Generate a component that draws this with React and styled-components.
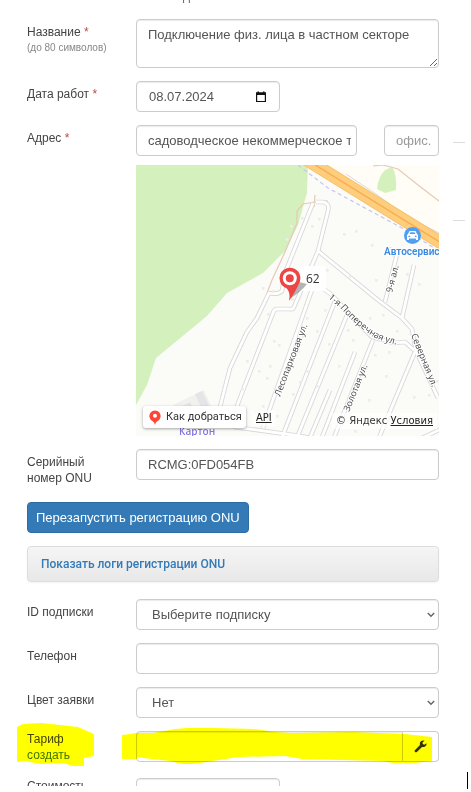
import React from "react";
import styled, { createGlobalStyle } from "styled-components";

const GlobalStyle = createGlobalStyle`
  *, *::before, *::after { box-sizing: border-box; }
  body {
    margin: 0;
    background: #fff;
    color: #444;
    font: 12px/16px "Liberation Sans", Arial, sans-serif;
  }
  button, input, select, textarea { font: inherit; color: inherit; }
`;

const controlFont = `13px/18px "Liberation Sans", Arial, sans-serif`;

const Page = styled.div`
  display: grid;
  grid-template-columns: minmax(0, 1fr) 18px;
  column-gap: 14px;
  min-height: 100vh;
  padding-left: 27px;
`;

const CutHeading = styled.div`
  display: flex;
  align-items: flex-end;
  height: 3px;
  padding-left: 156px;
  margin-bottom: 16px;
  overflow: hidden;
  color: #8a4a4a;
  line-height: 14px;
`;

const Form = styled.form`
  display: flex;
  flex-direction: column;
`;

const Row = styled.div`
  display: grid;
  grid-template-columns: 77px minmax(0, 1fr);
  column-gap: 32px;
  margin-bottom: 13px;
  ${(p) => p.$cut && "height: 8px; margin: 2px 0 0; overflow: hidden;"}
`;

const LabelCell = styled.div`
  position: relative;
  padding-top: ${(p) => (p.$tight ? 0 : 5)}px;
`;

const Label = styled.label`
  display: block;
`;

const Required = styled.span`
  color: #b94a48;
`;

const Hint = styled.small`
  display: block;
  color: #888;
  font-size: 10px;
  white-space: nowrap;
`;

const CreateLink = styled.a`
  color: #3c763d;
  text-decoration: none;
`;

const Field = styled.div`
  position: relative;
  display: flex;
  gap: ${(p) => p.$gap || 0}px;
`;

const Input = styled.input`
  flex: ${(p) => (p.$width ? `0 0 ${p.$width}px` : "1 1 0")};
  min-width: 0;
  height: 31px;
  padding: 0 5px 0 11px;
  border: 1px solid #ccc;
  border-radius: ${(p) => (p.$joined ? "4px 0 0 4px" : "4px")};
  background: #fff;
  box-shadow: inset 0 1px 1px rgba(0, 0, 0, 0.08);
  color: #555;
  font: ${controlFont};
  outline: none;
  &::placeholder { color: #999; opacity: 1; }
`;

const TextArea = styled.textarea`
  flex: 1;
  display: block;
  height: 49px;
  padding: 6px 11px;
  border: 1px solid #ccc;
  border-radius: 4px;
  box-shadow: inset 0 1px 1px rgba(0, 0, 0, 0.08);
  color: #555;
  font: ${controlFont};
  resize: vertical;
  outline: none;
`;

const DateBox = styled.div`
  display: flex;
  align-items: center;
  width: 144px;
  height: 31px;
  padding-right: 12px;
  border: 1px solid #ccc;
  border-radius: 4px;
  box-shadow: inset 0 1px 1px rgba(0, 0, 0, 0.08);
`;

const DateInput = styled.input`
  flex: 1;
  min-width: 0;
  padding: 0 0 0 12px;
  border: 0;
  background: none;
  color: #555;
  font: ${controlFont};
  outline: none;
`;

const IconButton = styled.button`
  display: flex;
  padding: 0;
  border: 0;
  background: none;
  color: #111;
`;

const SelectWrap = styled.div`
  position: relative;
  flex: 1;
`;

const Select = styled.select`
  appearance: none;
  display: block;
  width: 100%;
  height: 31px;
  padding: 0 24px 0 15px;
  border: 1px solid #ccc;
  border-radius: 4px;
  background: #fff;
  box-shadow: inset 0 1px 1px rgba(0, 0, 0, 0.08);
  color: #555;
  font: ${controlFont};
  outline: none;
`;

const Chevron = styled.svg`
  position: absolute;
  right: 4px;
  top: 13px;
  pointer-events: none;
`;

const ToolButton = styled.button`
  display: flex;
  align-items: center;
  justify-content: center;
  width: 36px;
  height: 31px;
  padding: 0;
  border: 1px solid #ccc;
  border-left: 0;
  border-radius: 0 4px 4px 0;
  background: #fff;
  color: #333;
`;

const PrimaryButton = styled.button`
  align-self: flex-start;
  height: 31px;
  margin: 3px 0 13px;
  padding: 0 8px;
  border: 1px solid #2e6da4;
  border-radius: 4px;
  background: #337ab7;
  color: #fff;
  font: ${controlFont};
`;

const LogPanel = styled.button`
  height: 36px;
  margin-bottom: 17px;
  padding: 0 13px;
  border: 1px solid #ddd;
  border-radius: 4px;
  background: linear-gradient(#f5f5f5, #e8e8e8);
  box-shadow: 0 1px 2px rgba(0, 0, 0, 0.05);
  color: #337ab7;
  font: 500 12px/16px Roboto, sans-serif;
  text-align: left;
`;

const Marker = styled.svg`
  position: absolute;
  left: ${(p) => p.$left}px;
  top: ${(p) => p.$top}px;
  width: calc(100% + ${(p) => p.$extra}px);
  height: 44px;
  fill: #ff0;
  mix-blend-mode: multiply;
  pointer-events: none;
`;

const MapFrame = styled.div`
  position: relative;
  flex: 1;
  height: 271px;
  margin-top: -4px;
  overflow: hidden;
  color: #333;
`;

const MapSvg = styled.svg`
  display: block;
  width: 100%;
  height: 100%;
  font: 10px "Open Sans", "Noto Sans", sans-serif;
`;

const RouteButton = styled.button`
  position: absolute;
  left: 7px;
  bottom: 8px;
  display: flex;
  align-items: center;
  gap: 5px;
  height: 22px;
  padding: 0 4px 0 6px;
  border: 0;
  border-radius: 3px;
  background: #fff;
  box-shadow: 0 1px 3px rgba(0, 0, 0, 0.35);
  color: #333;
  font: 11px/16px Roboto, sans-serif;
`;

const MapCredit = styled.div`
  position: absolute;
  ${(p) => (p.$start ? "left: 116px; bottom: 10px;" : "right: 2px; bottom: 7px;")}
  padding: 0 4px;
  background: rgba(255, 255, 255, 0.65);
  font: ${(p) => (p.$start ? "11px/16px 'DejaVu Sans Condensed', 'DejaVu Sans'" : "10px/16px 'DejaVu Sans'")}, sans-serif;
  white-space: nowrap;
  a { color: #222; }
`;

const Side = styled.aside`
  display: flex;
  flex-direction: column;
  gap: 77px;
  padding-top: 142px;
`;

const Rule = styled.hr`
  width: 12px;
  height: 1px;
  margin: 0;
  border: 0;
  background: #ddd;
`;

const Caret = styled.span`
  width: 1px;
  height: 17px;
  margin: auto 0 3px 14px;
  background: #000;
`;

const roads = [
  "M177 38L149 108L146 126Q142 130 133 128L121 153L111 167L94 203L84 242",
  "M180 37H187Q194 38 192 46L182 86L158 142Q157 145 153 144H141Q138 144 137 148L104 233L96 255",
  "M182 86L242 135L266 153L276 164L280 186L302 233",
  "M262 85L249 137",
  "M278 100L266 153",
  "M178 117L196 130L216 152L236 172L258 178L269 177L279 186",
  "M178 119L127 263",
  "M199 136L145 275",
  "M211 150L160 275",
  "M194 225L173 275",
  "M219 187L185 275",
  "M237 175L197 275",
  "M279 187L242 275",
  "M98 262L150 269L190 275",
  "M280 276L305 264",
];

const houses = [
  [165, 52], [154, 60], [150, 73], [175, 60], [182, 53], [207, 68], [219, 65], [235, 79], [148, 106], [190, 104],
  [136, 125], [126, 122], [155, 133], [131, 148], [137, 175], [142, 179], [110, 195], [122, 205], [105, 223],
  [133, 200], [130, 212], [170, 152], [166, 170], [161, 185], [170, 205], [163, 216], [156, 228], [188, 144],
  [180, 165], [192, 178], [180, 220], [202, 200], [211, 164], [216, 174], [233, 152], [239, 114], [213, 110],
  [256, 118], [252, 186], [238, 189], [249, 210], [277, 231], [292, 229], [287, 197], [300, 215], [270, 108],
  [282, 118], [246, 149], [260, 165], [227, 200], [220, 220], [232, 234], [210, 235], [205, 258], [218, 265],
  [118, 245], [126, 240], [140, 250], [253, 82], [256, 89],
];

function MapDrawing() {
  return (
    <MapSvg viewBox="0 0 303 271" preserveAspectRatio="xMidYMid slice" aria-label="Карта">
      <rect width="303" height="271" fill="#fbfcf7" />
      <path d="M179 0H303V76Z" fill="#fffdf5" />
      <path d="M0 0H172L171 28L162 60L150 85L127 108L91 128L71 151L20 193L11 220L0 240Z" fill="#d4f1bd" />
      <path d="M256 2Q261 9 260 25L249 28L241 24Q242 12 249 5Z" fill="#d4f1bd" />
      <g fill="none" stroke="#e6c9b8" strokeWidth="1.2">
        <path d="M237 1L247 0L262 4L282 20L303 36" />
        <path d="M179 30L178 42M192 36L179 37L167 39L161 46L161 58L149 87L136 115L131 128" />
      </g>
      <path d="M37 240L68 225L76 243L46 256Z" fill="#f1f1ef" />
      <path d="M41 244L54 237L57 243L44 250ZM59 229L66 226L73 240L66 244Z" fill="#e5e5e8" />
      <g fill="none" strokeLinejoin="round">
        {roads.map((d) => <path key={d} d={d} stroke="#d8d8da" strokeWidth="4.6" />)}
        {roads.map((d) => <path key={d} d={d} stroke="#fff" strokeWidth="2.8" />)}
      </g>
      <g fill="#ececea">
        {houses.map(([x, y]) => <rect key={`${x}-${y}`} x={x} y={y} width="2.6" height="2.6" />)}
      </g>
      <path d="M210 9L240 29L270 51L303 68" fill="none" stroke="#dadadc" />
      <path d="M168 -7L310 81" stroke="#f7bd66" strokeWidth="13" />
      <path d="M168 -7L310 81" stroke="#ffce7c" strokeWidth="11.4" />
      <path d="M168 -7L310 81" stroke="#f7ad55" strokeWidth="1.4" />
      <path d="M162 0L192 23L229 43L266 63L303 86" fill="none" stroke="#c9c3f3" strokeWidth="1.2" strokeDasharray="4 3" />
      <circle cx="276.500" cy="70.500" r="8.500" fill="#529ff0" />
      <path d="M272 69L273.500 66H279.500L281 69L282 70V75H280V73.500H273V75H271V70Z" fill="#fff" />
      <path d="M273.500 69L274.400 67.300H278.600L279.500 69ZM272.400 70.700H274.200V72H272.400ZM278.800 70.700H280.600V72H278.800Z" fill="#529ff0" />
      <g stroke="#fff" strokeWidth="2" paintOrder="stroke" strokeLinejoin="round">
        <text x="248" y="90" fill="#3a8ae0" fontFamily="Roboto" fontSize="10" fontWeight="600">Автосервис</text>
        <text x="43" y="270" fill="#8177df" fontSize="10" fontWeight="600">Картон</text>
        <g fill="#444" fontSize="9">
          <text transform="translate(256 128) rotate(-76)">9-я ал.</text>
          <text transform="translate(144 232) rotate(-69)">Лесопарковая ул.</text>
          <text transform="translate(213 247) rotate(-68)">Золотая ул.</text>
          <text transform="translate(275 170) rotate(68)">Северная ул.</text>
        </g>
        <path id="crossStreet" d="M192 133L205 144Q224 164 238 172Q246 177 268 181" fill="none" stroke="none" />
        <text fill="#444" fontSize="9"><textPath href="#crossStreet">1-я Поперечная ул.</textPath></text>
      </g>
      <rect x="157" y="101" width="33" height="25" rx="3" fill="#fff" opacity=".93" />
      <path d="M153 134L163 117L171 119Q164 128 153 134Z" fill="#777" opacity=".55" />
      <path d="M153 136Q155 127 150.500 123.200A10.500 10.500 0 1 1 163 118.500Q160 126 153 136Z" fill="#ed4543" />
      <circle cx="153.800" cy="113.300" r="7" fill="#fff" />
      <circle cx="153.800" cy="113.300" r="4" fill="#ed4543" />
      <text x="170" y="118" fill="#333" fontSize="12">62</text>
    </MapSvg>
  );
}

function SelectField({ id, children }) {
  return (
    <SelectWrap>
      <Select id={id}>{children}</Select>
      <Chevron width="8" height="6" viewBox="0 0 8 6" fill="none" stroke="#666" strokeWidth="1.5">
        <path d="M0.800 1L4 4.200L7.200 1" />
      </Chevron>
    </SelectWrap>
  );
}

export default function App() {
  return (
    <>
      <GlobalStyle />
      <Page>
        <Form onSubmit={(e) => e.preventDefault()}>
          <CutHeading>д</CutHeading>

          <Row>
            <LabelCell>
              <Label htmlFor="title">Название <Required>*</Required><Hint>(до 80 символов)</Hint></Label>
            </LabelCell>
            <Field>
              <TextArea id="title" defaultValue="Подключение физ. лица в частном секторе" />
            </Field>
          </Row>

          <Row>
            <LabelCell><Label htmlFor="date">Дата работ <Required>*</Required></Label></LabelCell>
            <DateBox>
              <DateInput id="date" defaultValue="08.07.2024" />
              <IconButton type="button" aria-label="Открыть календарь">
                <svg width="12" height="12" viewBox="0 0 12 12">
                  <path d="M1.600 2H10.400V10.500H1.600Z" fill="none" stroke="currentColor" strokeWidth="1.200" />
                  <path d="M1 1.500H11V4H1ZM2.500 0.500H4V2H2.500ZM8 0.500H9.500V2H8Z" fill="currentColor" />
                </svg>
              </IconButton>
            </DateBox>
          </Row>

          <Row>
            <LabelCell><Label htmlFor="address">Адрес <Required>*</Required></Label></LabelCell>
            <Field $gap={27}>
              <Input id="address" defaultValue="садоводческое некоммерческое т" />
              <Input $width={55} aria-label="Офис" placeholder="офис." />
            </Field>
          </Row>

          <Row>
            <LabelCell />
            <MapFrame>
              <MapDrawing />
              <RouteButton type="button">
                <svg width="12" height="15" viewBox="0 0 12 15">
                  <path d="M6 15Q5.500 12 3.500 11A5.600 5.600 0 1 1 8.500 11Q6.500 12 6 15Z" fill="#f43" />
                  <circle cx="6" cy="5.800" r="2" fill="#fff" />
                </svg>
                Как добраться
              </RouteButton>
              <MapCredit $start><a href="#api">API</a></MapCredit>
              <MapCredit>© Яндекс <a href="#terms">Условия</a></MapCredit>
            </MapFrame>
          </Row>

          <Row>
            <LabelCell><Label htmlFor="serial">Серийный номер ONU</Label></LabelCell>
            <Field><Input id="serial" defaultValue="RCMG:0FD054FB" /></Field>
          </Row>

          <PrimaryButton type="button">Перезапустить регистрацию ONU</PrimaryButton>
          <LogPanel type="button">Показать логи регистрации ONU</LogPanel>

          <Row>
            <LabelCell><Label htmlFor="subscription">ID подписки</Label></LabelCell>
            <Field><SelectField id="subscription"><option>Выберите подписку</option></SelectField></Field>
          </Row>
          <Row>
            <LabelCell><Label htmlFor="phone">Телефон</Label></LabelCell>
            <Field><Input id="phone" type="tel" /></Field>
          </Row>
          <Row>
            <LabelCell><Label htmlFor="color">Цвет заявки</Label></LabelCell>
            <Field><SelectField id="color"><option>Нет</option></SelectField></Field>
          </Row>
          <Row>
            <LabelCell $tight>
              <Label htmlFor="tariff">Тариф</Label>
              <CreateLink href="#create">создать</CreateLink>
              <Marker $left={-10} $top={-9} $extra={0} viewBox="0 0 77 44" preserveAspectRatio="none">
                <path d="M0 5L6 2L25 1L43 3L61 5L70 9L77 12V34L67 36V44H56L46 41L23 42L8 39L0 40Z" />
              </Marker>
            </LabelCell>
            <Field>
              <Input id="tariff" $joined />
              <ToolButton type="button" aria-label="Настроить тариф">
                <svg width="13" height="13" viewBox="0 0 13 13" fill="currentColor">
                  <path d="M12.500 3.300L10.300 4.700L8.700 3.900L8.600 2.200L10.700 0.800Q7.500 -0.200 6.100 2.200Q5.600 3.500 6 5L0.800 10.200Q0.300 11.300 1 12Q1.900 12.700 2.900 12L8 6.900Q9.500 7.300 11 6.500Q12.800 5.400 12.500 3.300Z" />
                </svg>
              </ToolButton>
              <Marker $left={-14} $top={-10} $extra={7} viewBox="0 0 310 44" preserveAspectRatio="none">
                <path d="M0 14L8 13L14 12H31L53 8L65 7H91L133 8L153 11L170 12L230 11L283 13L310 16V40L293 42H271L260 40L180 38L163 35L116 36L91 40L71 43H60L48 40L21 37L15 36V38H0Z" />
              </Marker>
            </Field>
          </Row>
          <Row $cut>
            <LabelCell $tight><Label htmlFor="cost">Стоимость</Label></LabelCell>
            <Field><Input id="cost" $width={144} /></Field>
          </Row>
        </Form>
        <Side>
          <Rule />
          <Rule />
          <Caret />
        </Side>
      </Page>
    </>
  );
}
